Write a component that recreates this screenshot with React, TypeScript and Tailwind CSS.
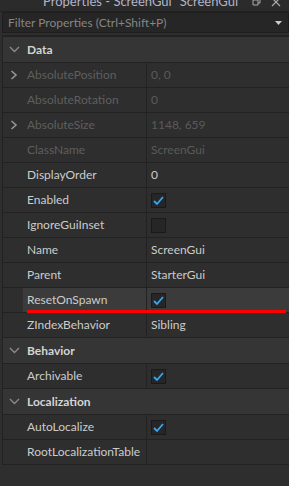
import React from "react";

type Row = {
  name: string;
  value?: string;
  check?: boolean;
  disabled?: boolean;
  expand?: boolean;
  hover?: boolean;
};

type Section = { title: string; rows: Row[] };

const sections: Section[] = [
  {
    title: "Data",
    rows: [
      { name: "AbsolutePosition", value: "0, 0", disabled: true, expand: true },
      { name: "AbsoluteRotation", value: "0", disabled: true },
      { name: "AbsoluteSize", value: "1148, 659", disabled: true, expand: true },
      { name: "ClassName", value: "ScreenGui", disabled: true },
      { name: "DisplayOrder", value: "0" },
      { name: "Enabled", check: true },
      { name: "IgnoreGuiInset", check: false },
      { name: "Name", value: "ScreenGui" },
      { name: "Parent", value: "StarterGui" },
      { name: "ResetOnSpawn", check: true, hover: true },
      { name: "ZIndexBehavior", value: "Sibling" },
    ],
  },
  { title: "Behavior", rows: [{ name: "Archivable", check: true }] },
  {
    title: "Localization",
    rows: [
      { name: "AutoLocalize", check: true },
      { name: "RootLocalizationTable", value: "" },
    ],
  },
];

function Checkbox({ checked }: { checked: boolean }) {
  return (
    <div className="w-[15px] h-[15px] bg-[#262626] border border-[#1a1a1a] flex items-center justify-center">
      {checked && (
        <svg width="13" height="13" viewBox="0 0 13 13">
          <path d="M2 7 L5 10 L11 3" fill="none" stroke="#3aa6f2" strokeWidth="1.8" />
        </svg>
      )}
    </div>
  );
}

function PropRow({ row }: { row: Row }) {
  const nameColor = row.disabled ? "text-[#5e5e5e]" : "text-[#cccccc]";
  const valueColor = row.disabled ? "text-[#5a5a5a]" : "text-[#cccccc]";
  return (
    <div className="relative flex h-[25px] border-b border-[#222222]">
      <div className="w-[20px] flex items-center pl-[7px]">
        {row.expand && (
          <svg width="8" height="10" viewBox="0 0 8 10">
            <path d="M1.5 1 L6 5 L1.5 9" fill="none" stroke="#9a9a9a" strokeWidth="1.5" />
          </svg>
        )}
      </div>
      <div className={`flex flex-1 ${row.hover ? "bg-[#3b3b3b]" : ""}`}>
        <div className={`w-[124px] border-r border-[#222222] flex items-center pl-[4px] ${nameColor}`}>
          {row.name}
        </div>
        <div className={`flex-1 flex items-center pl-[4px] ${valueColor}`}>
          {row.check !== undefined ? <Checkbox checked={row.check} /> : row.value}
        </div>
      </div>
      {row.hover && (
        <div className="absolute left-[24px] right-[3px] bottom-[-1px] h-[3px] bg-[#ff0000]" />
      )}
    </div>
  );
}

export default function App() {
  return (
    <div
      className="w-[289px] h-[486px] bg-[#2e2e2e] overflow-hidden text-[12px]"
      style={{ fontFamily: "Lato, 'Liberation Sans', sans-serif" }}
    >
      <div className="h-[12px] overflow-hidden bg-[#2b2b2b] border-b border-[#222222]">
        <div className="-mt-[8px] h-[19px] flex items-center relative">
          <div className="flex-1 pl-[43px] text-[13px] text-[#b4b4c8]">
            Properties - ScreenGui "ScreenGui"
          </div>
          <div className="flex items-center gap-[10px] pr-[8px]">
            <svg width="9" height="9" viewBox="0 0 9 9">
              <path d="M1 3 H6 V8 H1 Z M3 3 V1 H8 V6 H6" fill="none" stroke="#aaaaaa" strokeWidth="1" />
            </svg>
            <svg width="10" height="10" viewBox="0 0 10 10">
              <path d="M1 1 L9 9 M9 1 L1 9" stroke="#aaaaaa" strokeWidth="1.2" />
            </svg>
          </div>
        </div>
      </div>
      <div className="ml-[2px] h-[21px] bg-[#262626] border border-[#1e1e1e] flex items-center pl-[5px] pr-[6px] text-[#858585]">
        <span className="flex-1">Filter Properties (Ctrl+Shift+P)</span>
        <svg width="7" height="4" viewBox="0 0 7 4">
          <path d="M0 0 H7 L3.5 4 Z" fill="#cccccc" />
        </svg>
      </div>
      <div className="h-[2px]" />
      <div className="ml-[2px] border-l border-t-2 border-[#222222]">
        {sections.map((s) => (
          <div key={s.title}>
            <div className="h-[26px] bg-[#353535] border-b border-[#222222] flex items-center">
              <div className="w-[24px] pl-[6px] flex items-center">
                <svg width="11" height="7" viewBox="0 0 11 7">
                  <path d="M1 1 L5.5 5.5 L10 1" fill="none" stroke="#8a8a8a" strokeWidth="1.4" />
                </svg>
              </div>
              <span className="font-bold text-[#d4d4d4]">{s.title}</span>
            </div>
            {s.rows.map((r) => (
              <PropRow key={r.name} row={r} />
            ))}
          </div>
        ))}
      </div>
    </div>
  );
}
